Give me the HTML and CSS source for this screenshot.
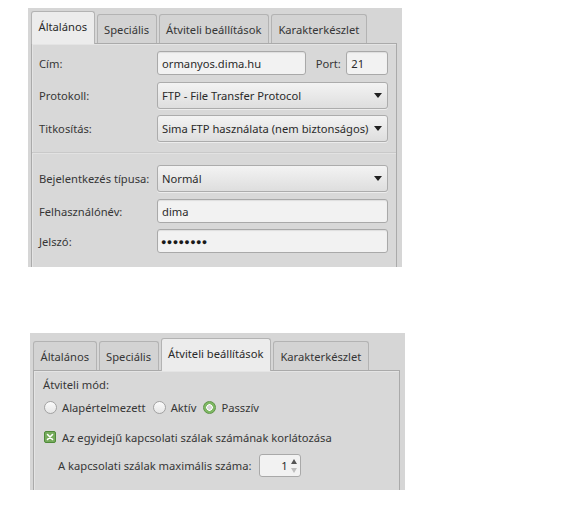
FILE: index.html
```html
<!DOCTYPE html>
<html lang="hu">
<head>
<meta charset="utf-8">
<link rel="stylesheet" href="styles.css">
</head>
<body>
<div class="page">
  <div class="shot shot-top">
    <div class="tabs">
      <div class="tab active">Általános</div>
      <div class="tab">Speciális</div>
      <div class="tab">Átviteli beállítások</div>
      <div class="tab">Karakterkészlet</div>
    </div>
    <div class="frame frame-top">
      <div class="row r1">
        <span class="label">Cím:</span>
        <div class="entry host">ormanyos.dima.hu</div>
        <span class="portlabel">Port:</span>
        <div class="entry port">21</div>
      </div>
      <div class="row r2">
        <span class="label">Protokoll:</span>
        <div class="combo"><span>FTP - File Transfer Protocol</span><i class="arrow"></i></div>
      </div>
      <div class="row r3">
        <span class="label">Titkosítás:</span>
        <div class="combo"><span>Sima FTP használata (nem biztonságos)</span><i class="arrow"></i></div>
      </div>
      <div class="sep"></div>
      <div class="row r4">
        <span class="label">Bejelentkezés típusa:</span>
        <div class="combo"><span>Normál</span><i class="arrow"></i></div>
      </div>
      <div class="row r5">
        <span class="label">Felhasználónév:</span>
        <div class="entry wide">dima</div>
      </div>
      <div class="row r6">
        <span class="label">Jelszó:</span>
        <div class="entry wide pw">●●●●●●●●</div>
      </div>
    </div>
  </div>

  <div class="shot shot-bottom">
    <div class="tabs">
      <div class="tab">Általános</div>
      <div class="tab">Speciális</div>
      <div class="tab active">Átviteli beállítások</div>
      <div class="tab">Karakterkészlet</div>
    </div>
    <div class="frame frame-bottom">
      <div class="mode">Átviteli mód:</div>
      <div class="radios">
        <span class="radio"></span><span class="rlabel">Alapértelmezett</span>
        <span class="radio"></span><span class="rlabel">Aktív</span>
        <span class="radio checked"></span><span class="rlabel">Passzív</span>
      </div>
      <div class="check-row">
        <span class="check"><svg width="8" height="8" viewBox="0 0 8 8"><path d="M1.5 1.5 L6.5 6.5 M6.5 1.5 L1.5 6.5" stroke="#fff" stroke-width="1.6" stroke-linecap="round"/></svg></span>
        <span>Az egyidejű kapcsolati szálak számának korlátozása</span>
      </div>
      <div class="spin-row">
        <span>A kapcsolati szálak maximális száma:</span>
        <div class="spin"><span class="val">1</span><span class="btns"><i class="up"></i><i class="down"></i></span></div>
      </div>
    </div>
  </div>
</div>
</body>
</html>
```
FILE: styles.css
```css
* { box-sizing: border-box; }
body {
  margin: 0;
  background: #fff;
  font-family: "Noto Sans", "Open Sans", sans-serif;
  font-size: 11.2px;
  color: #363636;
}
.page {
  display: flex;
  flex-direction: column;
  padding-top: 8px;
}
.shot {
  background: #d6d6d6;
  overflow: hidden;
}
.shot-top {
  margin-left: 28px;
  width: 374px;
  height: 259px;
  padding: 3px 5px 0 3px;
}
.shot-bottom {
  margin-top: 66px;
  margin-left: 30px;
  width: 375px;
  height: 157px;
  padding: 5px 5px 0 3px;
}
.tabs {
  display: flex;
  align-items: flex-end;
  gap: 2px;
  height: 32px;
  position: relative;
  z-index: 1;
}
.tab {
  height: 29px;
  padding: 0 6.5px;
  display: flex;
  align-items: center;
  border: 1px solid #b3b3b3;
  border-bottom: none;
  border-radius: 3px 3px 0 0;
  background: #d3d3d3;
  white-space: nowrap;
  padding-top: 1px;
}
.tab.active {
  height: 33px;
  margin-bottom: -1px;
  background: #ececec;
  color: #2a2a2a;
  padding-top: 0;
  padding-bottom: 3px;
}
.frame {
  border: 1px solid #aaaaaa;
  box-shadow: inset 1px 1px 0 #e4e4e4;
  height: 400px;
  background: #d8d8d8;
}
.frame-top {
  padding: 7px 8px 0 7px;
}
.row {
  display: flex;
  align-items: center;
}
.label {
  width: 118px;
  flex: none;
  white-space: nowrap;
}
.entry {
  height: 24px;
  background: #f2f2f2;
  border: 1px solid #a9a9a9;
  border-radius: 3px;
  display: flex;
  align-items: center;
  padding: 0 4px;
  box-shadow: inset 0 1px 1px rgba(0,0,0,0.08);
  color: #2a2a2a;
  white-space: nowrap;
}
.host { width: 150px; }
.portlabel { margin-left: 10px; width: 31px; }
.port { width: 42px; }
.wide { flex: 1; }
.pw { font-size: 9px; letter-spacing: 0.4px; color: #1a1a1a; padding-left: 3px; }
.combo {
  flex: 1;
  height: 27px;
  border: 1px solid #acacac;
  border-radius: 3px;
  background: linear-gradient(#f3f3f3, #dedede);
  display: flex;
  align-items: center;
  justify-content: space-between;
  padding: 0 5px 0 4px;
  color: #2a2a2a;
  white-space: nowrap;
  box-shadow: 0 1px 0 rgba(255,255,255,0.5);
}
.arrow {
  flex: none;
  width: 0;
  height: 0;
  border-left: 4px solid transparent;
  border-right: 4px solid transparent;
  border-top: 5px solid #202020;
}
.r2 { margin-top: 7px; }
.r3 { margin-top: 6px; }
.sep {
  margin: 10px -8px 0 -7px;
  height: 2px;
  border-top: 1px solid #c9c9c9;
  border-bottom: 1px solid #e2e2e2;
}
.r4 { margin-top: 11px; }
.r5 { margin-top: 7px; }
.r6 { margin-top: 6px; }

.frame-bottom {
  padding: 4px 8px 0 9px;
}
.mode { height: 20px; line-height: 20px; }
.radios {
  display: flex;
  align-items: center;
  margin-top: 2px;
  height: 20px;
  margin-left: 1px;
}
.radio {
  width: 13px;
  height: 13px;
  border-radius: 50%;
  border: 1px solid #a2a2a2;
  background: linear-gradient(#fbfbfb, #e6e6e6);
  flex: none;
}
.radio.checked {
  border: 1px solid #5f9448;
  background: radial-gradient(circle, #d6d6d6 0 2px, #ffffff 2.5px 3px, #7fb864 3.5px);
}
.rlabel { margin-left: 5px; margin-right: 7px; }
.check-row {
  display: flex;
  align-items: center;
  margin-top: 10px;
  margin-left: 1px;
  height: 20px;
}
.check {
  width: 12px;
  height: 12px;
  background: #76ab5c;
  border: 1px solid #4f8a3a;
  border-radius: 2px;
  display: flex;
  align-items: center;
  justify-content: center;
  margin-right: 6px;
}
.spin-row {
  display: flex;
  align-items: center;
  margin-top: 7px;
  margin-left: 15px;
}
.spin {
  margin-left: 7px;
  width: 42px;
  height: 23px;
  border: 1px solid #a9a9a9;
  border-radius: 3px;
  background: #f2f2f2;
  display: flex;
  align-items: center;
  justify-content: flex-end;
  padding-right: 2px;
}
.val { margin-right: 3px; color: #2a2a2a; }
.btns {
  display: flex;
  flex-direction: column;
  gap: 4px;
  width: 7px;
  align-items: center;
}
.up {
  border-left: 3px solid transparent;
  border-right: 3px solid transparent;
  border-bottom: 5px solid #555;
}
.down {
  border-left: 3px solid transparent;
  border-right: 3px solid transparent;
  border-top: 5px solid #bdbdbd;
}
```
